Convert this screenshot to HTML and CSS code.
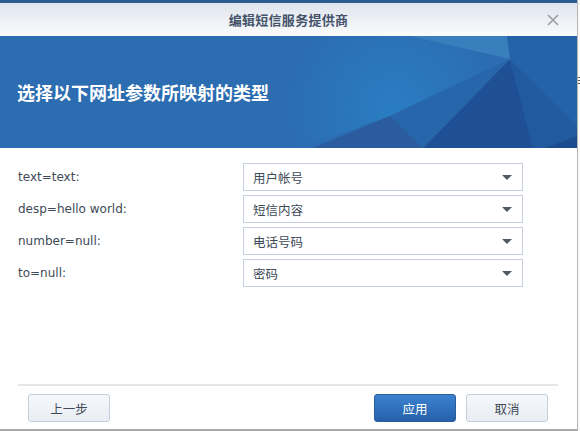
FILE: index.html
```html
<!DOCTYPE html>
<html lang="zh">
<head>
<meta charset="utf-8">
<link rel="stylesheet" href="styles.css">
</head>
<body>
<div class="screen">
  <div class="dialog">
    <div class="topstrip"></div>
    <div class="titlebar">
      <span class="title">编辑短信服务提供商</span>
      <svg class="close" viewBox="0 0 12 12" width="12" height="12"><path d="M1 1L11 11M11 1L1 11" stroke="#9b9fa4" stroke-width="1.6" fill="none"/></svg>
    </div>
    <div class="banner">
      <svg class="banner-bg" viewBox="0 0 577 112" preserveAspectRatio="none">
        <defs>
          <radialGradient id="glow" cx="393" cy="72" r="110" gradientUnits="userSpaceOnUse">
            <stop offset="0" stop-color="#2a80c6"/>
            <stop offset="1" stop-color="#2c6cb0"/>
          </radialGradient>
        </defs>
        <rect width="577" height="112" fill="#2c6cb1"/>
        <polygon points="200,0 410,0 510,23 390,80 300,112 250,112" fill="url(#glow)" opacity="0.85"/>
        <polygon points="410,0 507,0 510,23" fill="#3a7fbd"/>
        <polygon points="507,0 577,0 577,90 510,23" fill="#2563a9"/>
        <polygon points="510,23 577,90 577,112 533,112" fill="#225aa0"/>
        <polygon points="510,23 533,112 423,112" fill="#1f5095"/>
        <polygon points="510,23 423,112 390,80" fill="#2766ab"/>
        <polygon points="390,80 423,112 313,112" fill="#2a5c9f"/>
        <polygon points="577,100 577,112 545,112" fill="#1d4c8e"/>
      </svg>
      <h1 class="banner-title">选择以下网址参数所映射的类型</h1>
    </div>
    <div class="form">
      <div class="row">
        <span class="label">text=text:</span>
        <div class="select"><span>用户帐号</span><i class="caret"></i></div>
      </div>
      <div class="row">
        <span class="label">desp=hello world:</span>
        <div class="select"><span>短信内容</span><i class="caret"></i></div>
      </div>
      <div class="row">
        <span class="label">number=null:</span>
        <div class="select"><span>电话号码</span><i class="caret"></i></div>
      </div>
      <div class="row">
        <span class="label">to=null:</span>
        <div class="select"><span>密码</span><i class="caret"></i></div>
      </div>
    </div>
    <div class="footer">
      <div class="sep"></div>
      <div class="buttons">
        <button class="btn">上一步</button>
        <div class="right">
          <button class="btn primary">应用</button>
          <button class="btn">取消</button>
        </div>
      </div>
    </div>
  </div>
  <div class="edge"></div>
  <div class="outside"><span class="mark"></span></div>
</div>
</body>
</html>
```

FILE: styles.css
```css
html, body {
  margin: 0;
  padding: 0;
}
body {
  width: 580px;
  height: 431px;
  overflow: hidden;
  background: #ffffff;
  font-family: "Noto Sans CJK SC", "Liberation Sans", sans-serif;
}
.screen {
  display: flex;
  height: 431px;
}
.dialog {
  width: 577px;
  height: 429px;
  display: flex;
  flex-direction: column;
  background: #fff;
  border-bottom: 2px solid #a9a9a9;
}
.edge {
  width: 1px;
  height: 431px;
  background: #b4b4b4;
}
.outside {
  width: 2px;
  background: #fafafa;
  position: relative;
}
.outside .mark {
  position: absolute;
  left: 0;
  top: 77px;
  width: 2px;
  height: 7px;
  background: repeating-linear-gradient(#555 0 1px, transparent 1px 3px);
}
.topstrip {
  height: 3px;
  background: #2c5b92;
}
.titlebar {
  height: 33px;
  background: linear-gradient(#dfe5ee, #fafbfc);
  display: flex;
  align-items: center;
  justify-content: center;
  position: relative;
}
.title {
  font-size: 13px;
  font-weight: bold;
  color: #44526a;
  letter-spacing: 0.3px;
}
.close {
  position: absolute;
  right: 18px;
  top: 11px;
}
.banner {
  height: 112px;
  position: relative;
  display: flex;
  align-items: center;
  overflow: hidden;
}
.banner-bg {
  position: absolute;
  left: 0;
  top: 0;
  width: 577px;
  height: 112px;
}
.banner-title {
  position: relative;
  margin: 0 0 0 17px;
  font-size: 18px;
  font-weight: bold;
  color: #ffffff;
}
.form {
  padding: 15px 0 0 18px;
  display: flex;
  flex-direction: column;
  gap: 4px;
}
.row {
  display: flex;
  align-items: center;
  height: 28px;
}
.label {
  width: 225px;
  font-family: "DejaVu Sans", "Noto Sans CJK SC", sans-serif;
  font-size: 12px;
  color: #3e4a57;
}
.select {
  height: 26px;
  border: 1px solid #c5d0dc;
  display: flex;
  align-items: center;
  justify-content: space-between;
  padding: 0 10px 0 9px;
  box-sizing: content-box;
  width: 259px;
  font-size: 12.5px;
  color: #3e4a57;
}
.caret {
  width: 0;
  height: 0;
  border-left: 5px solid transparent;
  border-right: 5px solid transparent;
  border-top: 5px solid #505a64;
}
.footer {
  margin-top: auto;
  padding: 0 19px 7px 18px;
}
.sep {
  height: 2px;
  background: #e4e6e9;
}
.buttons {
  display: flex;
  justify-content: space-between;
  align-items: center;
  margin-top: 8px;
  padding: 0 0 0 10px;
}
.right {
  display: flex;
  gap: 10px;
  margin-right: 10px;
}
.btn {
  width: 82px;
  height: 28px;
  border: 1px solid #c3cfdc;
  border-radius: 3px;
  background: linear-gradient(#f5f8fb, #e9eef4);
  font-family: "Noto Sans CJK SC", sans-serif;
  font-size: 12.5px;
  color: #3e4a57;
  padding: 0;
}
.btn.primary {
  border-color: #2a5f9e;
  background: linear-gradient(#3c82d0, #2561aa);
  color: #ffffff;
}
```
